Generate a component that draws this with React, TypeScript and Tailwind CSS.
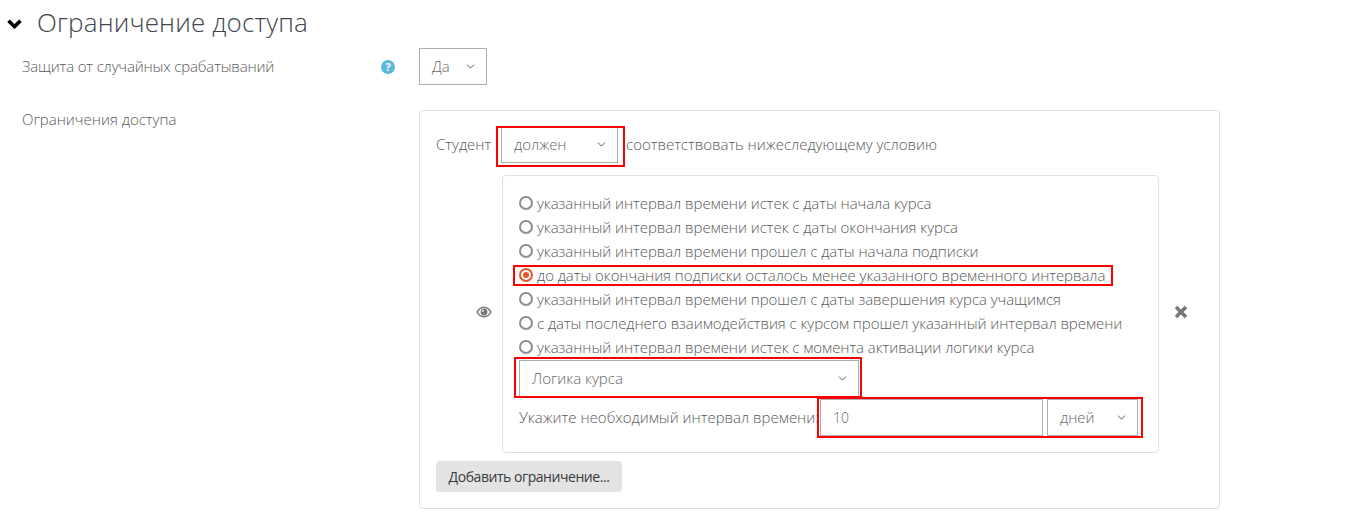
import React from 'react';
import { ChevronDown } from 'lucide-react';

const OPTIONS = [
  { text: 'указанный интервал времени истек с даты начала курса' },
  { text: 'указанный интервал времени истек с даты окончания курса' },
  { text: 'указанный интервал времени прошел с даты начала подписки' },
  { text: 'до даты окончания подписки осталось менее указанного временного интервала', checked: true },
  { text: 'указанный интервал времени прошел с даты завершения курса учащимся' },
  { text: 'с даты последнего взаимодействия с курсом прошел указанный интервал времени' },
  { text: 'указанный интервал времени истек с момента активации логики курса' },
];

// красная рамка-пометка поверх контрола
const Mark = ({ className }: { className: string }) => (
  <div className={`absolute border-2 border-[#ff0000] pointer-events-none ${className}`} />
);

const Select = ({ label, className }: { label: string; className: string }) => (
  <div className={`flex items-center justify-between h-[37px] border border-[#a9b0bc] bg-white pl-3 pr-[9px] text-[#666] ${className}`}>
    <span>{label}</span>
    <ChevronDown size={13} strokeWidth={1.5} className="text-[#333]" />
  </div>
);

const Radio = ({ checked }: { checked?: boolean }) =>
  checked ? (
    <span className="flex items-center justify-center w-[14px] h-[14px] rounded-full border-2 border-[#e8582c] shrink-0">
      <span className="w-[6px] h-[6px] rounded-full bg-[#e8582c]" />
    </span>
  ) : (
    <span className="w-[14px] h-[14px] rounded-full border-2 border-[#8e8c99] shrink-0" />
  );

export default function App() {
  return (
    <div className="w-[1345px] h-[524px] overflow-hidden bg-white text-[15px] text-[#595959] font-['Open_Sans','Noto_Sans',sans-serif] font-light">
      <div className="flex items-center h-[46px] pl-[7px]">
        <svg width="15" height="10" viewBox="0 0 15 10" className="mt-[1px]">
          <path d="M1.5 1.8 L7.5 7.6 L13.5 1.8" fill="none" stroke="#000" strokeWidth="3.6" />
        </svg>
        <h3 className="ml-[15px] -mt-[2px] text-[26px] tracking-[0.15px] leading-[46px] text-[#3f4650]">Ограничение доступа</h3>
      </div>

      <div className="flex items-start h-[62px] pl-[22px] mt-[2px]">
        <div className="w-[357px] pt-[7px] tracking-[-0.15px]">Защита от случайных срабатываний</div>
        <div className="w-[40px] pt-[12px] pl-[2px]">
          <span className="flex items-center justify-center w-[14px] h-[14px] rounded-full bg-[#5bb8dc] text-white text-[11px] font-bold">?</span>
        </div>
        <Select label="Да" className="w-[68px]" />
      </div>

      <div className="flex items-start pl-[22px]">
        <div className="w-[397px] -mt-[2px]">Ограничения доступа</div>
        <div className="relative w-[801px] h-[399px] border border-[#dfdfdf] rounded pl-[16px] pt-[15px]">
          <div className="flex items-center">
            <span className="w-[65px]">Студент</span>
            <Select label="должен" className="w-[117px]" />
            <span className="ml-[8px]">соответствовать нижеследующему условию</span>
          </div>

          <div className="flex items-center mt-[12px]">
            <div className="w-[66px] pl-[40px] -mt-[4px]">
              <svg width="16" height="12" viewBox="0 0 16 12">
                <path d="M8 0.5C4.6 0.5 1.8 2.7 0.3 6c1.5 3.3 4.3 5.5 7.7 5.5s6.2-2.2 7.7-5.5C14.2 2.7 11.4 0.5 8 0.5z" fill="#777" />
                <path d="M8 1.9C5.5 1.9 3.2 3.5 1.9 6c1.3 2.5 3.6 4.1 6.1 4.1s4.8-1.6 6.1-4.1C12.8 3.5 10.5 1.9 8 1.9z" fill="#fff" />
                <circle cx="8" cy="6" r="3.4" fill="#777" />
                <circle cx="6.8" cy="4.8" r="1" fill="#fff" />
              </svg>
            </div>
            <div className="w-[657px] h-[278px] border border-[#dfdfdf] rounded pl-[16px] pt-[15px]">
              {OPTIONS.map((o) => (
                <div key={o.text} className="flex items-center gap-[4px] h-[24px]">
                  <Radio checked={o.checked} />
                  <span className="whitespace-nowrap tracking-[-0.05px]">{o.text}</span>
                </div>
              ))}
              <Select label="Логика курса" className="w-[340px] mt-[1px]" />
              <div className="flex items-center mt-[2px]">
                <span className="w-[301px] whitespace-nowrap">Укажите необходимый интервал времени:</span>
                <div className="flex items-center w-[223px] h-[37px] border border-[#a9b0bc] pl-3 text-[14px] text-[#666]">10</div>
                <Select label="дней" className="w-[91px] ml-[4px]" />
              </div>
            </div>
            <svg width="14" height="14" viewBox="0 0 14 14" className="ml-[15px] -mt-[4px]">
              <path d="M2 2 L12 12 M12 2 L2 12" fill="none" stroke="#777" strokeWidth="3.6" />
            </svg>
          </div>

          <button className="mt-[8px] h-[31px] w-[186px] rounded bg-[#e3e3e3] text-[14px] tracking-[-0.45px] font-normal text-[#373a3c] whitespace-nowrap">Добавить ограничение...</button>

          <Mark className="left-[76px] top-[15px] w-[129px] h-[41px]" />
          <Mark className="left-[93px] top-[154px] w-[600px] h-[21px]" />
          <Mark className="left-[94px] top-[246px] w-[348px] h-[41px]" />
          <Mark className="left-[397px] top-[286px] w-[326px] h-[41px]" />
        </div>
      </div>
    </div>
  );
}
